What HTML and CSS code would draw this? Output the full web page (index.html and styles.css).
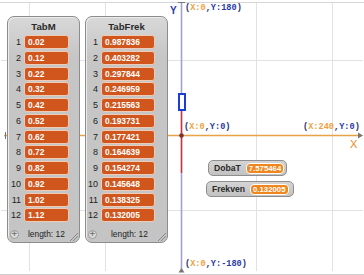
FILE: index.html
```html
<!DOCTYPE html>
<html>
<head>
<meta charset="utf-8">
<link rel="stylesheet" href="styles.css">
</head>
<body>
<div class="stage">
  <svg class="axes" width="364" height="275" viewBox="0 0 364 275">
    <g stroke="#e2e2e2" stroke-width="1">
      <line x1="29.5" y1="3" x2="29.5" y2="271"/>
      <line x1="105.5" y1="3" x2="105.5" y2="271"/>
      <line x1="256.5" y1="3" x2="256.5" y2="271"/>
      <line x1="332.5" y1="3" x2="332.5" y2="271"/>
      <line x1="1" y1="60.5" x2="363" y2="60.5"/>
      <line x1="1" y1="210.5" x2="363" y2="210.5"/>
    </g>
    <line x1="4" y1="135.5" x2="360" y2="135.5" stroke="#e6a446" stroke-width="1.5"/>
    <line x1="5.5" y1="132" x2="5.5" y2="139" stroke="#777" stroke-width="1"/>
    <polygon points="358,132.5 363,135.5 358,138.5" fill="#777"/>
    <line x1="181.5" y1="3" x2="181.5" y2="271" stroke="#a2a2d0" stroke-width="1.6"/>
    <line x1="178" y1="2.5" x2="185" y2="2.5" stroke="#777" stroke-width="1"/>
    <polygon points="178.5,272.5 181.5,268 184.5,272.5" fill="#777"/>
    <line x1="181.5" y1="110" x2="181.5" y2="173" stroke="#d03434" stroke-width="1.4"/>
    <rect x="179" y="94" width="6" height="16" fill="#fff" stroke="#1c3dd0" stroke-width="2"/>
    <circle cx="181.5" cy="135.5" r="2.3" fill="#7a3434"/>
  </svg>

  <span class="axis-label y-label">Y</span>
  <span class="axis-label x-label">X</span>
  <span class="coord c-top">(<b class="cx">X:0</b>,<b class="cy">Y:180</b>)</span>
  <span class="coord c-origin">(<b class="cx">X:0</b>,<b class="cy">Y:0</b>)</span>
  <span class="coord c-right">(<b class="cx">X:240</b>,<b class="cy">Y:0</b>)</span>
  <span class="coord c-bottom">(<b class="cx">X:0</b>,<b class="cy">Y:-180</b>)</span>

  <div class="watcher list tabm">
    <div class="title">TabM</div>
    <div class="rows">
      <div class="row"><span class="idx">1</span><span class="cell">0.02</span></div>
      <div class="row"><span class="idx">2</span><span class="cell">0.12</span></div>
      <div class="row"><span class="idx">3</span><span class="cell">0.22</span></div>
      <div class="row"><span class="idx">4</span><span class="cell">0.32</span></div>
      <div class="row"><span class="idx">5</span><span class="cell">0.42</span></div>
      <div class="row"><span class="idx">6</span><span class="cell">0.52</span></div>
      <div class="row"><span class="idx">7</span><span class="cell">0.62</span></div>
      <div class="row"><span class="idx">8</span><span class="cell">0.72</span></div>
      <div class="row"><span class="idx">9</span><span class="cell">0.82</span></div>
      <div class="row"><span class="idx">10</span><span class="cell">0.92</span></div>
      <div class="row"><span class="idx">11</span><span class="cell">1.02</span></div>
      <div class="row"><span class="idx">12</span><span class="cell">1.12</span></div>
    </div>
    <div class="footer"><span class="plus">+</span><span class="len">length: 12</span></div>
    <span class="grip"></span>
  </div>

  <div class="watcher list tabfrek">
    <div class="title">TabFrek</div>
    <div class="rows">
      <div class="row"><span class="idx">1</span><span class="cell">0.987836</span></div>
      <div class="row"><span class="idx">2</span><span class="cell">0.403282</span></div>
      <div class="row"><span class="idx">3</span><span class="cell">0.297844</span></div>
      <div class="row"><span class="idx">4</span><span class="cell">0.246959</span></div>
      <div class="row"><span class="idx">5</span><span class="cell">0.215563</span></div>
      <div class="row"><span class="idx">6</span><span class="cell">0.193731</span></div>
      <div class="row"><span class="idx">7</span><span class="cell">0.177421</span></div>
      <div class="row"><span class="idx">8</span><span class="cell">0.164639</span></div>
      <div class="row"><span class="idx">9</span><span class="cell">0.154274</span></div>
      <div class="row"><span class="idx">10</span><span class="cell">0.145648</span></div>
      <div class="row"><span class="idx">11</span><span class="cell">0.138325</span></div>
      <div class="row"><span class="idx">12</span><span class="cell">0.132005</span></div>
    </div>
    <div class="footer"><span class="plus">+</span><span class="len">length: 12</span></div>
    <span class="grip"></span>
  </div>

  <div class="watcher var doba"><span class="vname">DobaT</span><span class="vval">7.575464</span></div>
  <div class="watcher var frek"><span class="vname">Frekven</span><span class="vval">0.132005</span></div>
</div>
</body>
</html>
```

FILE: styles.css
```css
* { box-sizing: border-box; }
html, body { margin: 0; padding: 0; background: #fff; }
body { width: 364px; height: 275px; overflow: hidden; font-family: "Liberation Sans", Arial, sans-serif; }

.stage {
  position: relative;
  width: 364px;
  height: 275px;
  background: #fff;
}
.stage::before {
  content: "";
  position: absolute;
  left: 0; top: 2px; right: 0; height: 271px;
  border-top: 1px solid #d6d6d6;
  border-bottom: 1px solid #cfcfcf;
}
.axes { position: absolute; left: 0; top: 0; }

.axis-label { position: absolute; font-size: 10px; line-height: 10px; }
.y-label { left: 170px; top: 6px; color: #2b3aa6; font-weight: bold; }
.x-label { left: 350px; top: 139px; color: #ee8a22; font-size: 11px; }

.coord {
  position: absolute;
  font-family: "Liberation Mono", "DejaVu Sans Mono", monospace;
  font-weight: bold;
  font-size: 8.6px;
  line-height: 9px;
  color: #2a3170;
  white-space: nowrap;
}
.coord b { font-weight: bold; }
.coord .cx { color: #f0a040; }
.coord .cy { color: #2a3aa8; }
.c-top { left: 185px; top: 4px; }
.c-origin { left: 184px; top: 123px; }
.c-right { left: 303px; top: 123px; }
.c-bottom { left: 185px; top: 260px; }

.watcher { position: absolute; }

.list {
  top: 16px;
  height: 227px;
  border: 1px solid #8c8c8c;
  border-radius: 7px;
  background: linear-gradient(#d8d8d8, #c6c6c6 40px, #c4c4c4);
  box-shadow: inset 1px 1px 0 #ececec;
  display: flex;
  flex-direction: column;
}
.tabm { left: 7px; width: 73px; }
.tabfrek { left: 85px; width: 83px; }

.title {
  height: 18px;
  text-align: center;
  font-weight: bold;
  font-size: 9.6px;
  line-height: 19px;
  color: #2a2a2a;
}
.rows { display: flex; flex-direction: column; gap: 1.75px; }
.row { display: flex; align-items: center; height: 14px; }
.idx {
  text-align: right;
  font-size: 9px;
  color: #222;
  padding-right: 3px;
}
.tabm .idx { width: 16px; }
.tabfrek .idx { width: 15px; }
.cell {
  height: 14px;
  background: #d0561d;
  border: 1px solid #f0cbb4;
  border-radius: 3px;
  color: #fff;
  font-weight: bold;
  font-size: 8.4px;
  line-height: 12px;
  padding-left: 3px;
}
.tabm .cell { width: 45px; }
.tabfrek .cell { width: 54px; }

.footer {
  margin-top: auto;
  height: 16px;
  display: flex;
  align-items: center;
  padding-left: 2px;
  font-size: 8.4px;
  color: #222;
}
.plus {
  width: 9px; height: 9px;
  border-radius: 50%;
  background: #dcdcdc;
  border: 1px solid #9a9a9a;
  color: #777;
  font-size: 9px;
  line-height: 7px;
  text-align: center;
  font-weight: bold;
}
.tabm .len { margin-left: 9px; }
.tabfrek .len { margin-left: 14px; }
.grip {
  position: absolute;
  right: 1px; bottom: 1px;
  width: 8px; height: 8px;
  background: linear-gradient(135deg, transparent 0 45%, #888 45% 52%, transparent 52% 65%, #888 65% 72%, transparent 72% 85%, #888 85% 92%, transparent 92%);
  border-bottom-right-radius: 5px;
}

.var {
  height: 16px;
  border: 1px solid #8e8e8e;
  border-radius: 5px;
  background: linear-gradient(#d4d4d4, #c2c2c2);
  display: flex;
  align-items: center;
  padding-left: 5px;
  gap: 5px;
}
.doba { left: 208px; top: 160px; width: 79px; }
.frek { left: 206px; top: 181px; width: 88px; }
.vname { font-weight: bold; font-size: 8.6px; color: #2a2a2a; }
.vval {
  height: 11px;
  background: #ef861e;
  border: 1px solid #fff;
  border-radius: 4px;
  color: #fff;
  font-weight: bold;
  font-size: 7.8px;
  line-height: 9px;
  padding: 0 2px;
}
```
